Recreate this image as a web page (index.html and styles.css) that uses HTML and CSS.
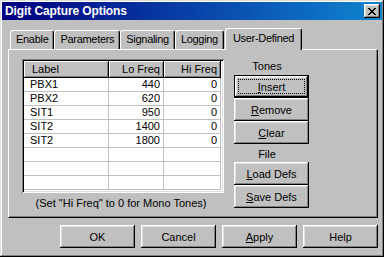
FILE: index.html
```html
<!DOCTYPE html>
<html lang="en">
<head>
    <meta charset="UTF-8">
    <title>Digit Capture Options</title>
    <link rel="stylesheet" href="styles.css">
</head>
<body>
    <div class="window">
        <div class="titlebar">
            <span class="title">Digit Capture Options</span>
            <button class="close-btn" type="button">
                <svg width="8" height="7" viewBox="0 0 8 7" shape-rendering="crispEdges">
                    <path fill="#000" d="M0 0h2v1H0z M6 0h2v1H6z M1 1h2v1H1z M5 1h2v1H5z M2 2h4v1H2z M3 3h2v1H3z M2 4h4v1H2z M1 5h2v1H1z M5 5h2v1H5z M0 6h2v1H0z M6 6h2v1H6z"/>
                </svg>
            </button>
        </div>

        <div class="dialog-body">
            <div class="tabs">
                <div class="tab">Enable</div>
                <div class="tab">Parameters</div>
                <div class="tab">Signaling</div>
                <div class="tab">Logging</div>
                <div class="tab active">User-Defined</div>
            </div>

            <div class="panel">
                <div class="list-col">
                    <div class="list">
                        <div class="row head">
                            <div class="cell">Label</div>
                            <div class="cell num">Lo Freq</div>
                            <div class="cell num">Hi Freq</div>
                        </div>
                        <div class="row"><div class="cell">PBX1</div><div class="cell num">440</div><div class="cell num">0</div></div>
                        <div class="row"><div class="cell">PBX2</div><div class="cell num">620</div><div class="cell num">0</div></div>
                        <div class="row"><div class="cell">SIT1</div><div class="cell num">950</div><div class="cell num">0</div></div>
                        <div class="row"><div class="cell">SIT2</div><div class="cell num">1400</div><div class="cell num">0</div></div>
                        <div class="row"><div class="cell">SIT2</div><div class="cell num">1800</div><div class="cell num">0</div></div>
                        <div class="row"><div class="cell"></div><div class="cell"></div><div class="cell"></div></div>
                        <div class="row"><div class="cell"></div><div class="cell"></div><div class="cell"></div></div>
                        <div class="row"><div class="cell"></div><div class="cell"></div><div class="cell"></div></div>
                    </div>
                    <p class="hint">(Set "Hi Freq" to 0 for Mono Tones)</p>
                </div>

                <div class="side-col">
                    <div class="group-label">Tones</div>
                    <button class="btn default" type="button"><span class="focus"><u>I</u>nsert</span></button>
                    <button class="btn" type="button"><u>R</u>emove</button>
                    <button class="btn" type="button"><u>C</u>lear</button>
                    <div class="group-label file">File</div>
                    <button class="btn" type="button"><u>L</u>oad Defs</button>
                    <button class="btn" type="button"><u>S</u>ave Defs</button>
                </div>
            </div>

            <div class="footer">
                <button class="btn" type="button">OK</button>
                <button class="btn" type="button">Cancel</button>
                <button class="btn" type="button"><u>A</u>pply</button>
                <button class="btn" type="button">Help</button>
            </div>
        </div>
    </div>
</body>
</html>
```

FILE: styles.css
```css
* {
    margin: 0;
    padding: 0;
    box-sizing: border-box;
}

body {
    background-color: #c0c0c0;
    font-family: 'Liberation Sans', Arial, sans-serif;
    font-size: 11px;
    color: #000;
}

.window {
    width: 384px;
    height: 257px;
    padding: 2px;
    background-color: #c0c0c0;
    box-shadow: inset -1px -1px #000, inset 1px 1px #dfdfdf,
                inset -2px -2px #808080, inset 2px 2px #fff;
}

/* title bar */
.titlebar {
    height: 18px;
    display: flex;
    align-items: center;
    justify-content: space-between;
    padding: 0 2px 0 3px;
    background: linear-gradient(90deg, #000080, #1084d0);
    color: white;
}

.title {
    font-size: 12px;
    font-weight: bold;
    letter-spacing: -0.1px;
}

.close-btn {
    width: 16px;
    height: 14px;
    border: none;
    background-color: #c0c0c0;
    display: flex;
    align-items: center;
    justify-content: center;
    padding-right: 1px;
    box-shadow: inset -1px -1px #000, inset 1px 1px #fff,
                inset -2px -2px #808080, inset 2px 2px #dfdfdf;
}

.dialog-body {
    padding: 8px 4px 0 6px;
}

/* tabs */
.tabs {
    display: flex;
    align-items: flex-end;
    height: 21px;
    padding-left: 2px;
}

.tab {
    height: 19px;
    padding: 0 5px;
    line-height: 17px;
    letter-spacing: -0.3px;
    border-top: 1px solid #fff;
    border-left: 1px solid #fff;
    border-right: 1px solid #000;
    border-radius: 3px 3px 0 0;
    box-shadow: inset -1px 0 #808080;
    background-color: #c0c0c0;
}

.tab.active {
    position: relative;
    z-index: 1;
    height: 22px;
    margin-bottom: -1px;
    margin-left: 1px;
    padding: 0 7px;
    line-height: 18px;
}

/* tab page */
.panel {
    height: 169px;
    display: flex;
    gap: 10px;
    padding: 9px 0 0 13px;
    border-top: 1px solid #fff;
    border-left: 1px solid #fff;
    border-right: 1px solid #000;
    border-bottom: 1px solid #000;
    box-shadow: inset -1px -1px #808080;
}

.list {
    width: 202px;
    height: 134px;
    padding: 2px;
    overflow: hidden;
    background-color: #fff;
    box-shadow: inset 1px 1px #808080, inset -1px -1px #fff,
                inset 2px 2px #000, inset -2px -2px #dfdfdf;
}

.row {
    display: grid;
    grid-template-columns: 85px 55px 57px;
    height: 14px;
}

.cell {
    padding: 0 3px 0 6px;
    line-height: 13px;
    border-right: 1px solid #c0c0c0;
    border-bottom: 1px solid #c0c0c0;
    white-space: nowrap;
}

.cell.num {
    text-align: right;
}

.row.head {
    height: 17px;
}

.row.head .cell {
    border: none;
    background-color: #c0c0c0;
    line-height: 16px;
    padding-left: 8px;
    box-shadow: inset -1px -1px #000, inset 1px 1px #fff,
                inset -2px -2px #808080;
}

.row.head .cell.num {
    padding-right: 4px;
}

.hint {
    margin-top: 3px;
    line-height: 14px;
    text-align: center;
    padding-right: 4px;
}

/* buttons */
.side-col {
    width: 75px;
    display: flex;
    flex-direction: column;
}

.group-label {
    height: 16px;
    line-height: 14px;
    text-align: center;
    padding-right: 9px;
}

.group-label.file {
    height: 18px;
    padding-top: 3px;
}

.btn {
    width: 75px;
    height: 23px;
    border: none;
    background-color: #c0c0c0;
    font-family: inherit;
    font-size: 11px;
    color: #000;
    box-shadow: inset -1px -1px #000, inset 1px 1px #fff,
                inset -2px -2px #808080, inset 2px 2px #dfdfdf;
}

.btn.default {
    position: relative;
    border: 1px solid #000;
}

.btn .focus {
    position: absolute;
    top: 3px;
    left: 3px;
    right: 3px;
    bottom: 3px;
    display: flex;
    align-items: center;
    justify-content: center;
    border: 1px dotted #000;
}

.footer {
    display: flex;
    justify-content: flex-end;
    gap: 6px;
    margin-top: 7px;
}
```
